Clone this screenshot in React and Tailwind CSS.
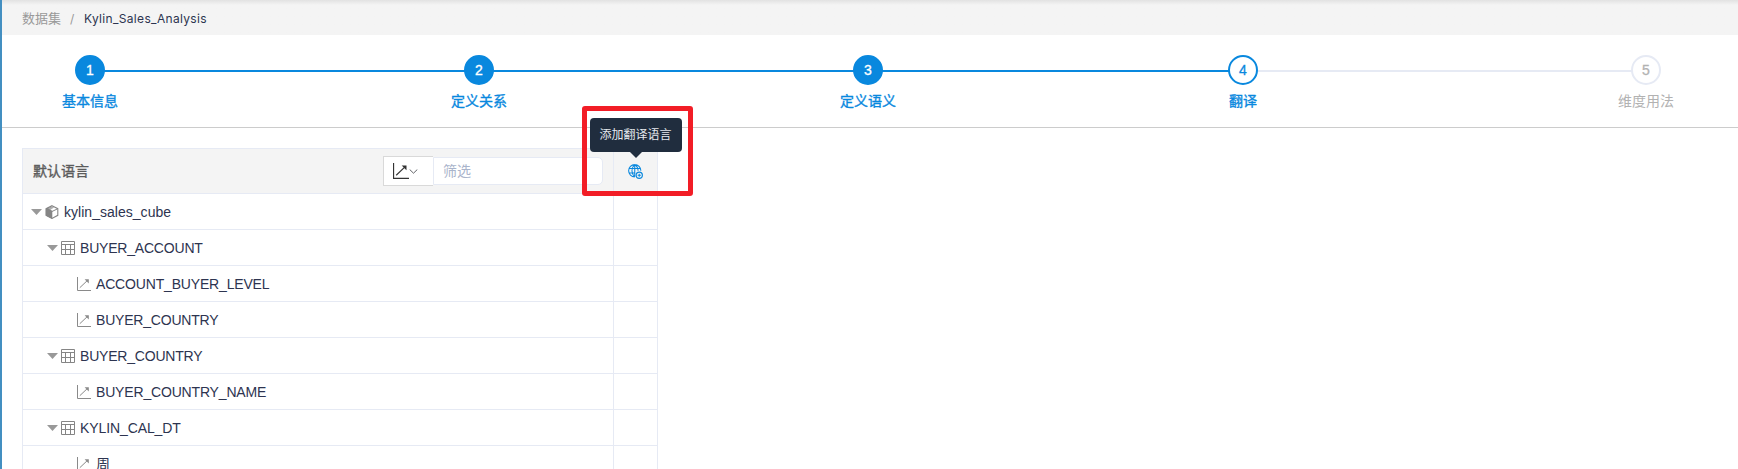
import React from "react";

const STEPS = [
  { n: 1, label: "基本信息", state: "done" },
  { n: 2, label: "定义关系", state: "done" },
  { n: 3, label: "定义语义", state: "done" },
  { n: 4, label: "翻译", state: "current" },
  { n: 5, label: "维度用法", state: "todo" },
];

const ROWS = [
  { level: 0, icon: "cube", text: "kylin_sales_cube", spacing: "tracking-[0.03px]" },
  { level: 1, icon: "table", text: "BUYER_ACCOUNT", spacing: "tracking-[-0.2px]" },
  { level: 2, icon: "dim", text: "ACCOUNT_BUYER_LEVEL", spacing: "tracking-[-0.17px]" },
  { level: 2, icon: "dim", text: "BUYER_COUNTRY", spacing: "tracking-[-0.2px]" },
  { level: 1, icon: "table", text: "BUYER_COUNTRY", spacing: "tracking-[-0.2px]" },
  { level: 2, icon: "dim", text: "BUYER_COUNTRY_NAME", spacing: "tracking-[-0.17px]" },
  { level: 1, icon: "table", text: "KYLIN_CAL_DT", spacing: "tracking-[-0.1px]" },
  { level: 2, icon: "dim", text: "周", spacing: "" },
];

const CIRCLE = {
  done: "w-[30px] border-[#0988de] bg-[#0988de] text-white",
  current: "w-[30px] border-[#0988de] bg-white text-[#0988de]",
  todo: "w-[30px] border-[#e6eaf4] bg-white text-[#b2b2b2]",
};

const LABEL = {
  done: "text-[#0988de] [-webkit-text-stroke:0.35px_#0988de]",
  current: "text-[#0988de] [-webkit-text-stroke:0.35px_#0988de]",
  todo: "text-[#b2b2b2]",
};

const STEP_WIDTH = ["w-[389px]", "w-[389px]", "w-[388px]", "w-[390px]", "w-[56px]"];
const LINE_WIDTH = ["w-[389px]", "w-[389px]", "w-[374px]", "w-[404px]"];

const INDENT = ["pl-[8px]", "pl-[24px]", "pl-[54px]"];

function DimensionIcon({ className }) {
  return (
    <svg className={className} viewBox="0 0 14 14" fill="none" stroke="currentColor">
      <path d="M0.5 0V13.5H14" />
      <path d="M2.8 10.7L10.5 3.4" />
      <path d="M7.6 2.2H11.8V6.4Z" fill="currentColor" stroke="none" />
    </svg>
  );
}

function TableIcon() {
  return (
    <svg className="size-[14px] text-[#858585]" viewBox="0 0 14 14" fill="none" stroke="currentColor">
      <path d="M0.5 0.5H13.5V13.5H0.5ZM0.5 3.5H13.5M0.5 8.5H13.5M4.5 3.5V13.5M9.5 3.5V13.5" />
    </svg>
  );
}

function CubeIcon() {
  return (
    <svg className="size-[14px] text-[#858585]" viewBox="0 0 14 14">
      <path d="M7 0.7L12.8 3.7V10.3L7 13.4L1.2 10.3V3.7Z" fill="none" stroke="currentColor" strokeWidth="1.1" />
      <path d="M0.7 3.4L7 1.6L9 2.4L5.5 4.8L7.3 5.8V14L0.7 10.6Z" fill="currentColor" />
      <path d="M3 3.6L7 1.7L11 3.6L7 5.6Z" fill="#ffffff" fillOpacity="0.35" />
      <path d="M7 6.5L12.8 3.7" fill="none" stroke="currentColor" />
    </svg>
  );
}

function GlobeAddIcon() {
  return (
    <svg className="size-[15px]" viewBox="0 0 14 14" fill="none" stroke="#0988de">
      <path d="M6.3 12A5.7 5.7 0 1 1 12 6.3M6.3 12C2.8 9 2.8 3.6 6.3 0.6C8.6 2.2 9.4 4.2 9.4 6.3M6.3 0.6V12M1.3 4.2H11.5M1.3 8.4H6.5" />
      <circle cx="10.5" cy="10.5" r="2.9" strokeWidth="1.1" />
      <path d="M10.5 9V12M9 10.5H12" />
    </svg>
  );
}

function Step({ step, index }) {
  const last = index === STEPS.length - 1;
  return (
    <li className={`flex shrink-0 ${STEP_WIDTH[index]}`}>
      <div className="relative flex flex-col items-center">
        <span
          className={`z-10 flex h-[30px] items-center justify-center rounded-full border-2 text-[14px] [-webkit-text-stroke:0.3px_currentColor] ${CIRCLE[step.state]}`}
        >
          {step.n}
        </span>
        <span className={`mt-[6px] whitespace-nowrap text-[14px] leading-[20px] ${LABEL[step.state]}`}>
          {step.label}
        </span>
        {!last && (
          <span
            className={`absolute left-1/2 top-[15px] h-[2px] ${LINE_WIDTH[index]} ${
              step.state === "done" ? "bg-[#0988de]" : "bg-[#e6eaf4]"
            }`}
          />
        )}
      </div>
    </li>
  );
}

function Row({ row }) {
  return (
    <div className="flex h-[36px] border-b border-[#e6eaf4]">
      <div className={`flex w-[591px] shrink-0 items-center border-r border-[#e6eaf4] ${INDENT[row.level]}`}>
        {row.level < 2 && (
          <svg className="mr-[3px] h-[6px] w-[11px]" viewBox="0 0 11 6">
            <path d="M0 0H11L5.5 6Z" fill="#999999" />
          </svg>
        )}
        {row.icon === "cube" && <CubeIcon />}
        {row.icon === "table" && <TableIcon />}
        {row.icon === "dim" && <DimensionIcon className="size-[14px] text-[#8a8a8a]" />}
        <span className={`ml-[5px] text-[14px] leading-[20px] text-[#2d3450] ${row.spacing}`}>{row.text}</span>
      </div>
      <div className="w-[43px]" />
    </div>
  );
}

export default function App() {
  return (
    <div className="h-[469px] overflow-hidden border-l-2 border-[#438fc1] bg-white font-['Liberation_Sans','Noto_Sans_CJK_SC',sans-serif]">
      <header className="h-[35px] bg-gradient-to-b from-[#e2e2e2] to-[#f4f4f4] to-[5px]">
        <nav className="flex h-[37px] items-center pl-[20px] font-['Inter','Noto_Sans_CJK_SC',sans-serif] text-[12px]">
          <span className="text-[13px] text-[#999999]">数据集</span>
          <span className="mx-[9px] w-[5px] text-[#999999]">/</span>
          <span className="tracking-[0.33px] text-[#2d3450]">Kylin_Sales_Analysis</span>
        </nav>
      </header>

      <ol className="flex h-[93px] border-b border-[#cccccc] pl-[60px] pt-[20px]">
        {STEPS.map((s, i) => (
          <Step key={s.n} step={s} index={i} />
        ))}
      </ol>

      <main className="pl-[20px] pt-[20px]">
        <section className="w-[636px] border border-b-0 border-[#e6eaf4]">
          <div className="flex h-[45px] border-b border-[#e6eaf4] bg-[#f4f4f4]">
            <div className="flex w-[591px] shrink-0 items-center border-r border-[#e6eaf4] pl-[10px] pr-[10px]">
              <span className="text-[14px] text-[#5c5c5c] [-webkit-text-stroke:0.35px_#5c5c5c]">默认语言</span>
              <div className="ml-auto flex items-center">
                <button className="flex h-[30px] w-[50px] items-center border border-r-0 border-[#d9d9d9] bg-white pl-[9px] text-[#333333]">
                  <DimensionIcon className="size-[16px]" />
                  <svg className="h-[5px] w-[9px] text-[#606266]" viewBox="0 0 9 5" fill="none" stroke="currentColor">
                    <path d="M0.7 0.5L4.5 4.2L8.3 0.5" />
                  </svg>
                </button>
                <div className="flex h-[28px] w-[170px] items-center rounded-r-[5px] border border-[#e6eaf4] bg-white pl-[9px] text-[14px] text-[#a9b4cb]">
                  筛选
                </div>
              </div>
            </div>
            <div className="relative flex w-[43px] items-center justify-center">
              <GlobeAddIcon />
              <div className="absolute bottom-[41px] left-1/2 z-20 flex h-[34px] w-[92px] -translate-x-1/2 items-center justify-center rounded-[4px] bg-[#202d3e] text-[12px] text-[#e6e9ee]">
                添加翻译语言
                <svg className="absolute left-[40px] top-[34px] h-[6px] w-[12px]" viewBox="0 0 12 6">
                  <path d="M0 0H12L6 6Z" fill="#202d3e" />
                </svg>
              </div>
              <div className="absolute left-[-32px] top-[-43px] z-30 h-[90px] w-[111px] rounded-[3px] border-[5px] border-[#f21d26]" />
            </div>
          </div>
          {ROWS.map((r, i) => (
            <Row key={i} row={r} />
          ))}
        </section>
      </main>
    </div>
  );
}
